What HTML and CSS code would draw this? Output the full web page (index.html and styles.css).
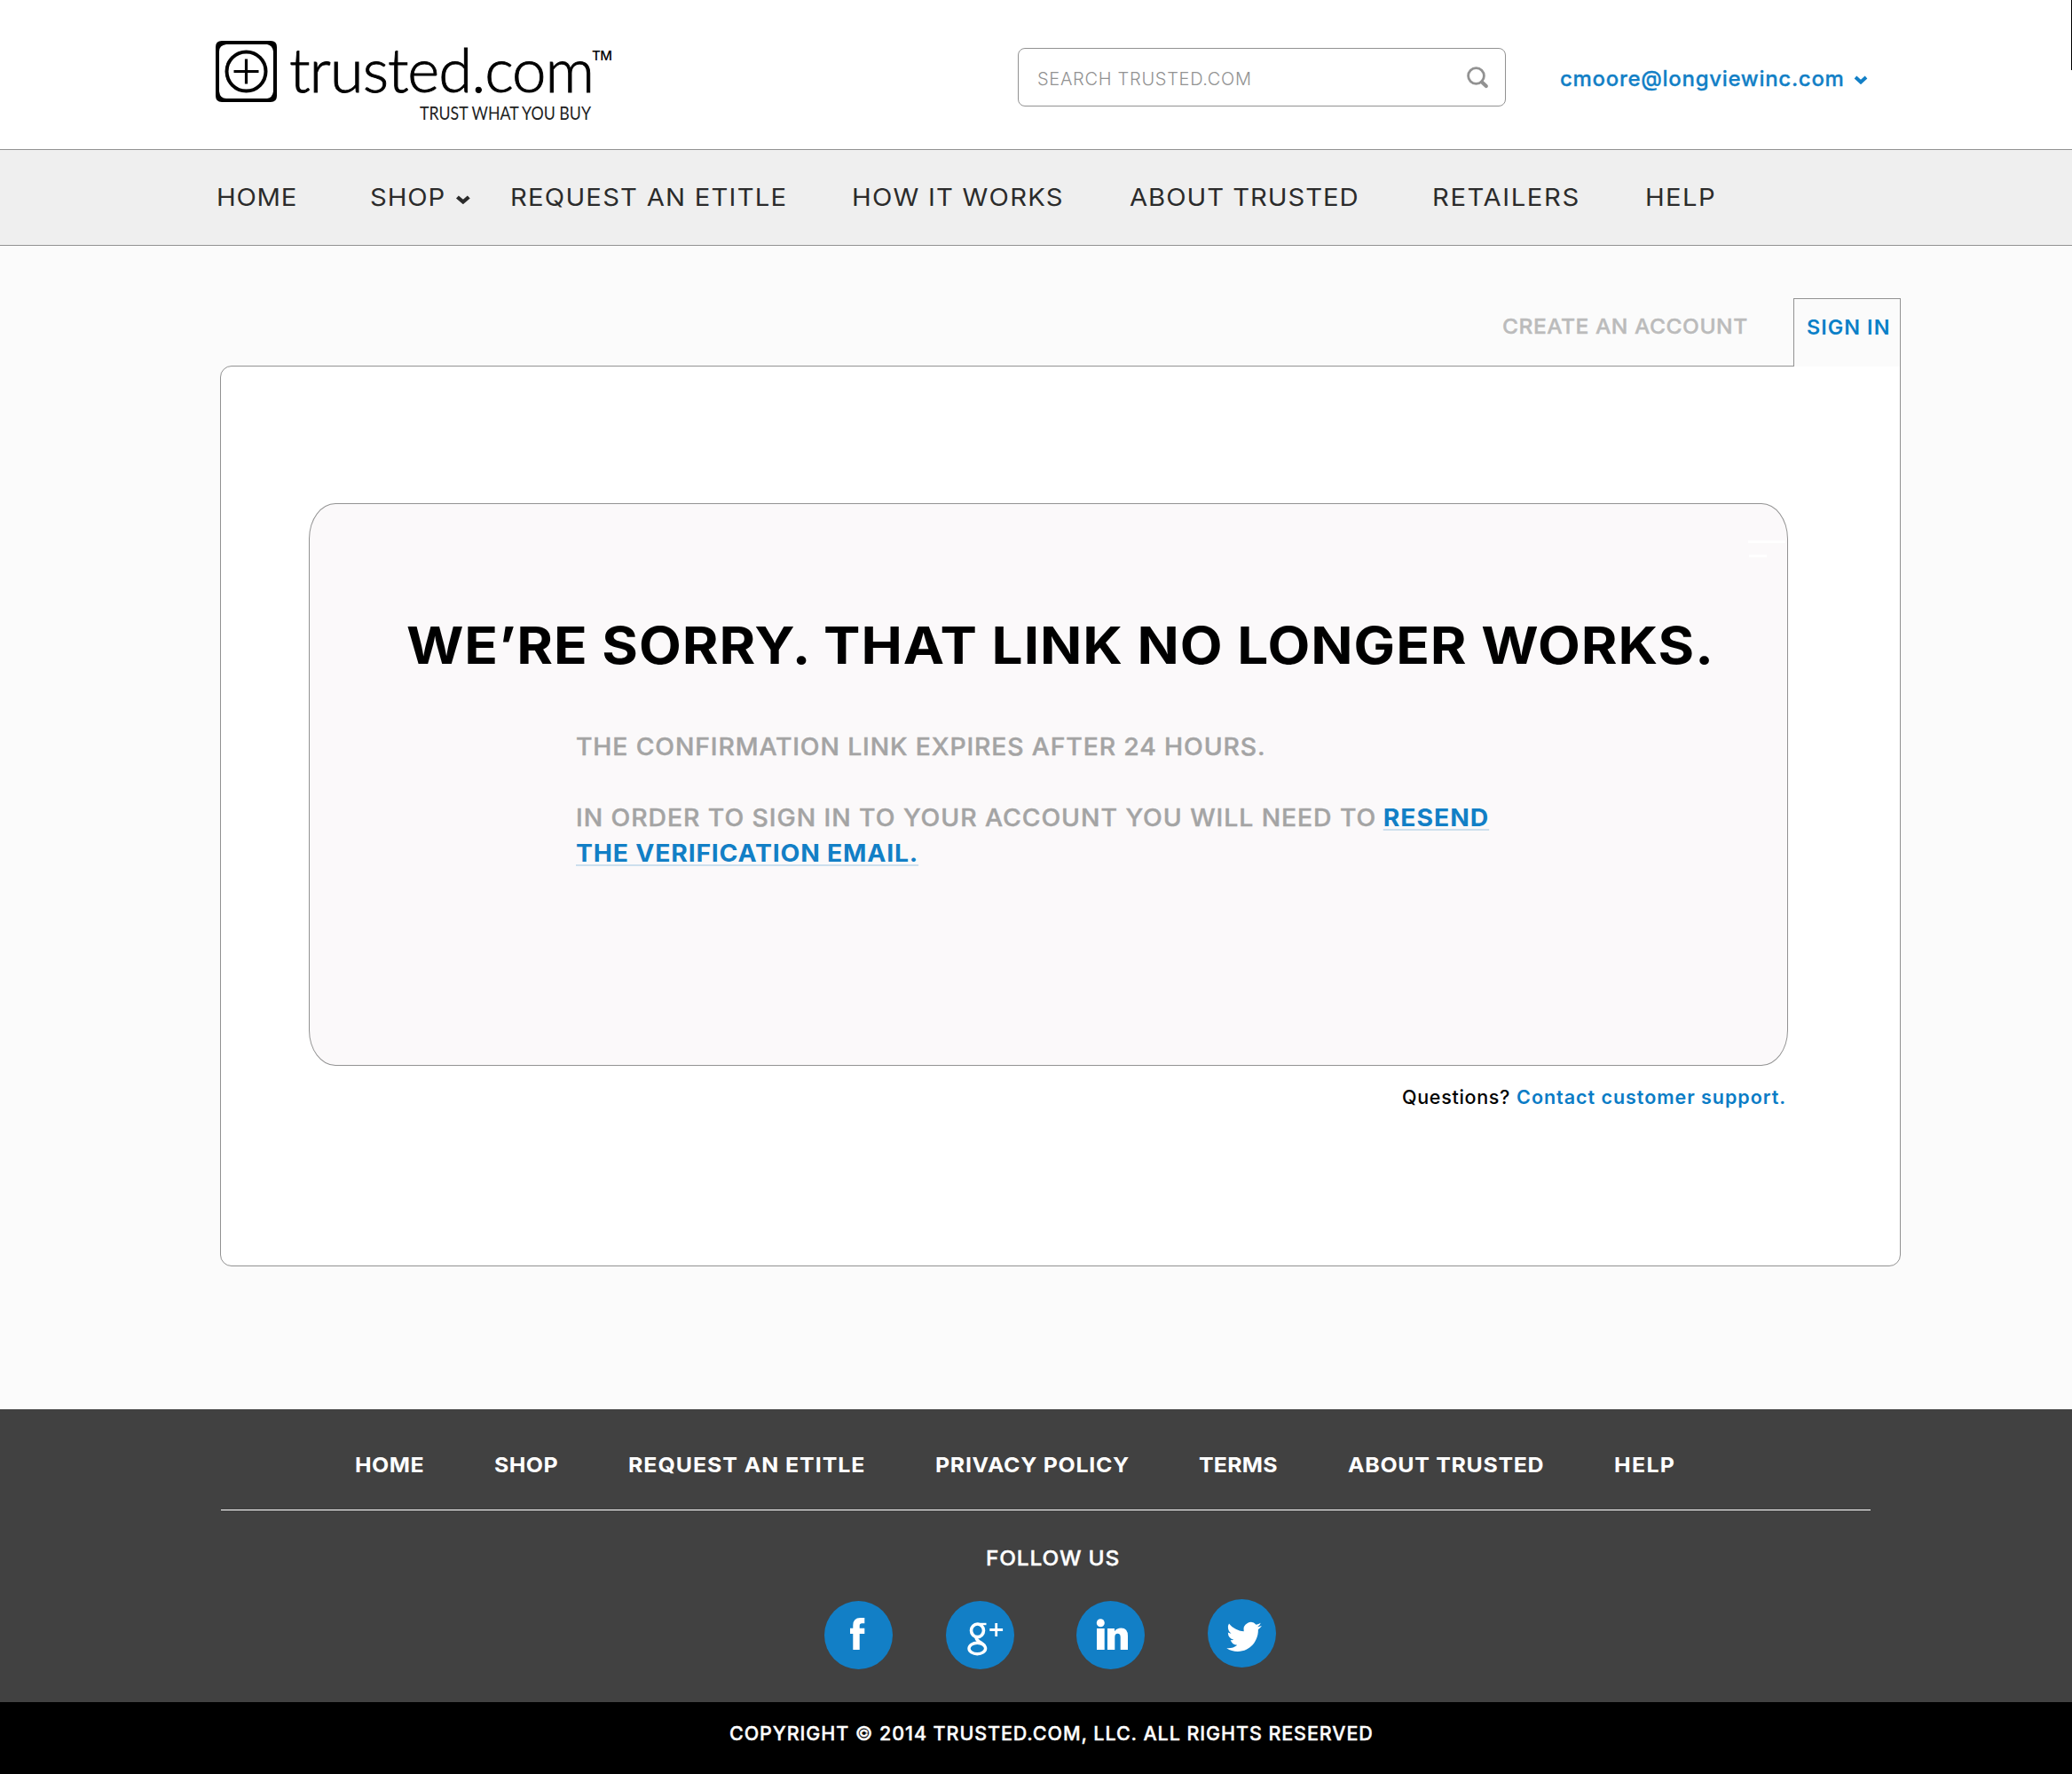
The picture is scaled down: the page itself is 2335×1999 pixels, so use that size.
FILE: index.html
```html
<!DOCTYPE html>
<html lang="en">
<head>
<meta charset="utf-8">
<title>Trusted.com</title>
<link rel="stylesheet" href="styles.css">
</head>
<body>
<header class="header">
  <a class="logo">
    <svg width="452" height="104" viewBox="0 0 452 104">
      <path fill-rule="evenodd" d="M7 2H62Q69 2 69 9V64Q69 71 62 71H7Q0 71 0 64V9Q0 2 7 2ZM12 6Q4 7 4 14V59Q5 67 12 67H58Q64 66 65 59V14Q64 7 58 6Z"/>
      <circle cx="34.5" cy="36.5" r="22" fill="none" stroke="#000" stroke-width="4"/>
      <path d="M34.5 22.5v28M20.5 36.500h28" stroke="#000" stroke-width="3.200"/>
      <text class="logo-name" x="83" y="60" textLength="344">trusted.com</text>
      <text class="logo-tag" x="230" y="90.500" textLength="193" lengthAdjust="spacingAndGlyphs">TRUST WHAT YOU BUY</text>
      <text class="logo-tm" x="424" y="24" textLength="23">TM</text>
    </svg>
  </a>
  <div class="search">
    <span class="search-text">SEARCH TRUSTED.COM</span>
    <svg class="search-icon" width="25" height="25" viewBox="0 0 25 25"><circle cx="10.500" cy="10.500" r="8.900" fill="none" stroke="#929292" stroke-width="2.800"/><path d="M17 17.500L21.800 22" stroke="#929292" stroke-width="4.200" stroke-linecap="round"/></svg>
  </div>
  <a class="account">cmoore@longviewinc.com<svg class="chevron" width="16" height="10" viewBox="0 0 16 10"><path d="M2 2L8 7.500L14 2" fill="none" stroke="currentColor" stroke-width="4"/></svg></a>
  <span class="edge"></span>
</header>
<nav class="nav">
  <a>HOME</a>
  <a>SHOP<svg class="chevron" width="16" height="10" viewBox="0 0 16 10"><path d="M2 2L8 7.500L14 2" fill="none" stroke="currentColor" stroke-width="4"/></svg></a>
  <a>REQUEST AN ETITLE</a>
  <a>HOW IT WORKS</a>
  <a>ABOUT TRUSTED</a>
  <a>RETAILERS</a>
  <a>HELP</a>
</nav>
<main class="main">
  <div class="tabs">
    <a class="tab">CREATE AN ACCOUNT</a>
    <a class="tab tab-active">SIGN IN</a>
  </div>
  <section class="panel">
    <div class="notice">
      <h1 class="title">WE’RE SORRY. THAT LINK NO LONGER WORKS.</h1>
      <div class="message">
        <p>THE CONFIRMATION LINK EXPIRES AFTER 24 HOURS.</p>
        <p class="order">IN ORDER TO SIGN IN TO YOUR ACCOUNT YOU WILL NEED TO <a class="resend">RESEND</a><br><a class="verify">THE VERIFICATION EMAIL.</a></p>
      </div>
      <span class="glint"></span>
      <span class="glint glint-short"></span>
    </div>
    <p class="support"><span class="question">Questions?</span><a class="contact">Contact customer support.</a></p>
  </section>
</main>
<footer class="footer">
  <nav class="footer-nav">
    <a>HOME</a>
    <a>SHOP</a>
    <a>REQUEST AN ETITLE</a>
    <a>PRIVACY POLICY</a>
    <a>TERMS</a>
    <a>ABOUT TRUSTED</a>
    <a>HELP</a>
  </nav>
  <p class="follow">FOLLOW US</p>
  <div class="social">
    <a class="bubble"><svg width="77" height="77" viewBox="0 0 77 77"><path fill="#fff" d="M32.300 55V37H29V30.700H32.300V27.500Q32.300 19 40.500 19H45.300V25.300H42.200Q39.700 25.300 39.700 28V30.700H45.300V37H39.700V55Z"/></svg></a>
    <a class="bubble"><svg width="77" height="77" viewBox="0 0 77 77"><g fill="none" stroke="#fff"><ellipse cx="35.500" cy="33.300" rx="7" ry="7.300" stroke-width="3.600"/><path d="M36 26H45.500" stroke-width="2.400"/><path d="M34.500 40.500Q33.500 43 37 45.500Q42 48.500 43.500 50.500" stroke-width="3.600"/><ellipse cx="35.300" cy="53.500" rx="9.300" ry="6.300" stroke-width="3.400"/><path d="M56.700 25v15M49.300 32.500h14.800" stroke-width="2.800"/></g></svg></a>
    <a class="bubble"><svg width="77" height="77" viewBox="0 0 77 77"><g fill="#fff"><circle cx="27.300" cy="24.700" r="4.500"/><path d="M23 31H31.700V55H23ZM35 31H43V34.200Q45.500 30.500 50.500 30.500Q58 30.500 58 39.500V55H49.700V41Q49.700 36.800 46.500 36.800Q43.300 36.800 43.300 41V55H35Z"/></g></svg></a>
    <a class="bubble"><svg width="77" height="77" viewBox="0 0 77 77"><path fill="#fff" transform="translate(21.300 22.200) scale(1.650 1.690)" d="M23.953 4.570a10 10 0 01-2.825.775 4.958 4.958 0 002.163-2.723c-.951.555-2.005.959-3.127 1.184a4.920 4.920 0 00-8.384 4.482C7.690 8.095 4.067 6.130 1.640 3.162a4.822 4.822 0 00-.666 2.475c0 1.710.870 3.213 2.188 4.096a4.904 4.904 0 01-2.228-.616v.060a4.923 4.923 0 003.946 4.827 4.996 4.996 0 01-2.212.085 4.936 4.936 0 004.604 3.417 9.867 9.867 0 01-6.102 2.105c-.390 0-.779-.023-1.170-.067a13.995 13.995 0 007.557 2.209c9.053 0 13.998-7.496 13.998-13.985 0-.210 0-.420-.015-.630A9.935 9.935 0 0024 4.590z"/></svg></a>
  </div>
  <div class="legal">COPYRIGHT © 2014 TRUSTED.COM, LLC. ALL RIGHTS RESERVED</div>
</footer>
</body>
</html>
```
FILE: styles.css
```css
* { box-sizing: border-box; }
body { margin: 0; width: 2335px; background: #fbfbfb; font-family: Inter, "Liberation Sans", sans-serif; color: #000; }
p, h1 { margin: 0; }
a, p, h1, span { white-space: nowrap; }
svg { display: block; }

.header { position: relative; height: 168px; display: flex; align-items: flex-start; background: #fff; padding-left: 243px; }
.logo { width: 904px; padding-top: 44px; }
.logo-name { font: 300 69px Lato, sans-serif; stroke: #000; stroke-width: 0.9px; }
.logo-tag { font: 400 22px Lato, sans-serif; fill: #222; }
.logo-tm { font: 500 15px Inter, sans-serif; }
.search { width: 550px; height: 66px; margin-top: 54px; border: 1px solid #929292; border-radius: 8px; padding: 0 18px 0 21px; display: flex; align-items: center; justify-content: space-between; }
.search-text { font-size: 20px; font-weight: 300; letter-spacing: 0.7px; color: #929292; line-height: 30px; padding-top: 3px; }
.account { display: flex; align-items: center; margin: 74px 0 0 61px; font-size: 24px; font-weight: 500; line-height: 30px; letter-spacing: 0.7px; color: #127fc6; -webkit-text-stroke: 0.3px currentColor; }
.account .chevron { margin: 1px 0 0 10px; }
.edge { position: absolute; right: 0; top: 0; width: 1px; height: 79px; background: #000; }

.nav { height: 109px; border-top: 1px solid #929292; border-bottom: 1px solid #929292; background: #efefef; padding-left: 244px; display: grid; grid-template-columns: 173px 158px 385px 313px 341px 239.5px auto; align-items: center; font-size: 27.3px; line-height: 40px; color: #2b2b2b; }
.nav a { display: flex; align-items: center; transform: scaleX(1.07); transform-origin: left center; }
.nav a:nth-child(1) { letter-spacing: 0.700px; }
.nav a:nth-child(2) { letter-spacing: 0.850px; }
.nav a:nth-child(3) { letter-spacing: 1.150px; }
.nav a:nth-child(4) { letter-spacing: 1.150px; }
.nav a:nth-child(5) { letter-spacing: 0.900px; }
.nav a:nth-child(6) { letter-spacing: 1.500px; }
.nav a:nth-child(7) { letter-spacing: 1.300px; }
.nav .chevron { margin: 5px 0 0 10px; }

.main { height: 1311px; padding: 59px 193px 0 248px; }
.tabs { display: flex; justify-content: flex-end; height: 76px; }
.tab { font-size: 23.4px; font-weight: 500; line-height: 64px; letter-spacing: 0.480px; color: #bbb; width: 264px; margin-right: 64px; transform: scaleX(1.05); transform-origin: left center; -webkit-text-stroke: 0.4px currentColor; }
.tab-active { position: relative; z-index: 1; width: 121px; height: 77px; padding: 0 0 0 14px; margin: 0; border: 1px solid #929292; border-bottom: 0; background: #fbfbfb; font-weight: 600; letter-spacing: 1.050px; line-height: 63px; color: #0a80c8; transform: none; -webkit-text-stroke: 0; }
.panel { height: 1015px; border: 1px solid #929292; border-radius: 13px 0 13px 13px; background: #fff; padding: 154px 0 0 99px; }
.notice { position: relative; width: 1667px; height: 634px; border: 1px solid #929292; border-radius: 30px / 40px; background: #fbf9fa; padding: 129px 0 0 109px; }
.title { width: 1360px; font-size: 57.5px; font-weight: 700; line-height: 60px; letter-spacing: 0.870px; transform: scaleX(1.08); transform-origin: left center; }
.message { width: 1000px; margin: 65px 0 0 191px; font-size: 27px; font-weight: 500; line-height: 40px; letter-spacing: 0.820px; color: #a4a4a4; transform: scaleX(1.05); transform-origin: left center; -webkit-text-stroke: 0.4px currentColor; }
.order { margin-top: 40px; letter-spacing: 0.900px; }
.resend, .verify { font-weight: 700; color: #127fc6; text-decoration: underline; text-decoration-color: #cddfed; text-decoration-thickness: 2px; text-underline-offset: 3px; text-decoration-skip-ink: none; -webkit-text-stroke: 0; }
.resend { letter-spacing: 0.900px; margin-left: -1px; }
.verify { letter-spacing: 0.760px; }
.glint { position: absolute; right: 2px; top: 41px; width: 42px; height: 3px; background: #fff; }
.glint-short { right: 23px; top: 57px; width: 20px; }
.support { width: 1665px; padding-top: 20px; display: flex; justify-content: flex-end; font-size: 21.500px; line-height: 30px; font-weight: 500; }
.question { letter-spacing: 0.680px; margin-right: 7px; }
.contact { letter-spacing: 0.960px; font-weight: 600; color: #0a7cc6; }

.footer { background: #414141; height: 411px; color: #fff; }
.footer-nav { margin: 0 227px 0 249px; height: 114px; padding: 48px 0 0 151px; border-bottom: 1px solid #fff; display: grid; grid-template-columns: 156.500px 151px 346px 297.500px 168px 299.500px auto; font-size: 23.500px; font-weight: 700; line-height: 30px; }
.footer-nav a { transform: scaleX(1.06); transform-origin: left center; }
.footer-nav a:nth-child(1) { letter-spacing: 0.450px; }
.footer-nav a:nth-child(2) { letter-spacing: 0.400px; }
.footer-nav a:nth-child(3) { letter-spacing: 0.900px; }
.footer-nav a:nth-child(4) { letter-spacing: 0.650px; }
.footer-nav a:nth-child(5) { letter-spacing: 0.200px; }
.footer-nav a:nth-child(6) { letter-spacing: 0.650px; }
.footer-nav a:nth-child(7) { letter-spacing: 1.250px; }
.follow { width: 160px; margin-left: 1111px; padding-top: 39px; font-size: 23.300px; font-weight: 500; line-height: 30px; letter-spacing: 0.800px; transform: scaleX(1.05); transform-origin: left center; -webkit-text-stroke: 0.4px currentColor; }
.social { display: flex; padding: 33px 0 0 929px; height: 147px; }
.bubble { width: 77px; height: 77px; border-radius: 50%; background: #127fc6; }
.bubble:nth-child(1) { margin-right: 60px; }
.bubble:nth-child(2) { margin-right: 70px; }
.bubble:nth-child(3) { margin-right: 71px; }
.bubble:nth-child(4) { margin-top: -2px; }
.legal { height: 81px; background: #000; padding: 20px 0 0 822px; font-size: 21.500px; font-weight: 500; line-height: 30px; letter-spacing: 0.920px; -webkit-text-stroke: 0.4px currentColor; }
```
